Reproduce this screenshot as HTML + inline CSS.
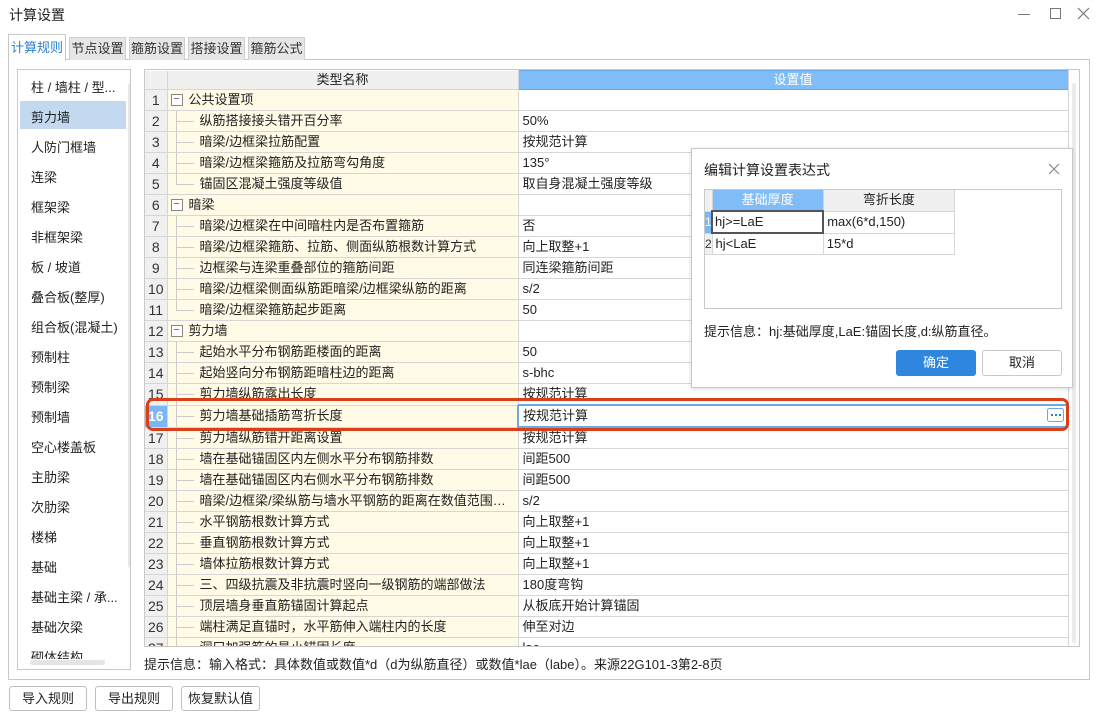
<!DOCTYPE html>
<html><head><meta charset="utf-8"><style>
*{box-sizing:border-box;margin:0;padding:0}
body{width:1100px;height:717px;background:#fff;font-family:"Liberation Sans","Noto Sans CJK SC",sans-serif;font-size:13px;color:#222;position:relative;overflow:hidden}
.a{position:absolute}
.tab{position:absolute;top:37px;height:23px;background:#e6e6e6;border:1px solid #cfcfcf;border-bottom:none;font-size:13px;line-height:22px;text-align:center;color:#333}
table{border-collapse:collapse;table-layout:fixed}
td{height:21px;border-bottom:1px solid #d6d6d6;border-right:1px solid #d6d6d6;white-space:nowrap;overflow:hidden;text-overflow:ellipsis;padding:0;line-height:20px}
td.n{background:#f0f0f0;text-align:center;color:#333;font-size:14px}
td.m{background:#fffbe6;position:relative}
td.v{background:#fff;padding-left:4px}
.g{padding-left:21px}
.bx{position:absolute;left:3px;top:4px;width:12px;height:12px;border:1px solid #888;font-size:11px;line-height:9px;text-align:center;color:#555;background:#fff}
.c{padding-left:32px}
.hl{position:absolute;left:9px;top:10px;width:17px;border-top:1px solid #ccc}
.vl{position:absolute;left:8px;top:0;height:21px;border-left:1px solid #ccc}
.li{position:absolute;left:31px;font-size:13px;color:#222}
.btn{position:absolute;top:686px;height:25px;border:1px solid #bfbfbf;border-radius:3px;background:#fff;text-align:center;line-height:23px;font-size:13px}
</style></head><body>
<div class="a" style="left:9px;top:5px;font-size:14px">计算设置</div>
<div class="a" style="left:1018px;top:14px;width:12px;border-top:1px solid #777"></div>
<div class="a" style="left:1050px;top:8px;width:11px;height:11px;border:1px solid #777"></div>
<svg class="a" style="left:1077px;top:7px" width="13" height="13"><path d="M1 1L12 12M12 1L1 12" stroke="#777" stroke-width="1.2"/></svg>

<div class="a" style="left:8px;top:59px;width:1082px;height:621px;border:1px solid #c8c8c8"></div>
<div class="tab" style="left:8px;top:34px;width:58px;height:27px;background:#fff;color:#2a7fd4;border-color:#c8c8c8;line-height:26px">计算规则</div>
<div class="tab" style="left:69px;width:57px">节点设置</div>
<div class="tab" style="left:129px;width:56px">箍筋设置</div>
<div class="tab" style="left:188px;width:57px">搭接设置</div>
<div class="tab" style="left:248px;width:57px">箍筋公式</div>

<div class="a" style="left:17px;top:69px;width:114px;height:601px;border:1px solid #c8c8c8;overflow:hidden">
<div class="a" style="left:2px;top:31px;width:106px;height:28px;background:#c3d9f0"></div>
<div class="a" style="left:110px;top:13px;width:5px;height:485px;background:#e8e8e8;border-radius:3px"></div>
</div>
<div class="li" style="top:77px">柱 / 墙柱 / 型...</div>
<div class="li" style="top:107px">剪力墙</div>
<div class="li" style="top:137px">人防门框墙</div>
<div class="li" style="top:167px">连梁</div>
<div class="li" style="top:197px">框架梁</div>
<div class="li" style="top:227px">非框架梁</div>
<div class="li" style="top:257px">板 / 坡道</div>
<div class="li" style="top:287px">叠合板(整厚)</div>
<div class="li" style="top:317px">组合板(混凝土)</div>
<div class="li" style="top:347px">预制柱</div>
<div class="li" style="top:377px">预制梁</div>
<div class="li" style="top:407px">预制墙</div>
<div class="li" style="top:437px">空心楼盖板</div>
<div class="li" style="top:467px">主肋梁</div>
<div class="li" style="top:497px">次肋梁</div>
<div class="li" style="top:527px">楼梯</div>
<div class="li" style="top:557px">基础</div>
<div class="li" style="top:587px">基础主梁 / 承...</div>
<div class="li" style="top:617px">基础次梁</div>
<div class="a" style="left:31px;top:647px;height:12px;overflow:hidden;font-size:13px">砌体结构</div>
<div class="a" style="left:30px;top:660px;width:75px;height:5px;background:#e4e4e4;border-radius:3px"></div>

<div class="a" style="left:144px;top:69px;width:936px;height:578px;border:1px solid #c8c8c8;overflow:hidden">
<table style="width:923px">
<colgroup><col style="width:22px"><col style="width:351px"><col style="width:550px"></colgroup>
<tr><td class="n" style="height:19px;line-height:18px"></td><td style="background:#f0f0f0;text-align:center;height:19px;line-height:18px">类型名称</td><td style="background:#80bcf7;border:1px solid #6aa8e8;text-align:center;color:#fff;height:19px;line-height:18px">设置值</td></tr>
<tr><td class="n">1</td><td class="m g"><span class="bx">−</span>公共设置项</td><td class="v"></td></tr>
<tr><td class="n">2</td><td class="m c"><span class="vl"></span><span class="hl"></span>纵筋搭接接头错开百分率</td><td class="v">50%</td></tr>
<tr><td class="n">3</td><td class="m c"><span class="vl"></span><span class="hl"></span>暗梁/边框梁拉筋配置</td><td class="v">按规范计算</td></tr>
<tr><td class="n">4</td><td class="m c"><span class="vl"></span><span class="hl"></span>暗梁/边框梁箍筋及拉筋弯勾角度</td><td class="v">135°</td></tr>
<tr><td class="n">5</td><td class="m c"><span class="vl" style="height:11px"></span><span class="hl"></span>锚固区混凝土强度等级值</td><td class="v">取自身混凝土强度等级</td></tr>
<tr><td class="n">6</td><td class="m g"><span class="bx">−</span>暗梁</td><td class="v"></td></tr>
<tr><td class="n">7</td><td class="m c"><span class="vl"></span><span class="hl"></span>暗梁/边框梁在中间暗柱内是否布置箍筋</td><td class="v">否</td></tr>
<tr><td class="n">8</td><td class="m c"><span class="vl"></span><span class="hl"></span>暗梁/边框梁箍筋、拉筋、侧面纵筋根数计算方式</td><td class="v">向上取整+1</td></tr>
<tr><td class="n">9</td><td class="m c"><span class="vl"></span><span class="hl"></span>边框梁与连梁重叠部位的箍筋间距</td><td class="v">同连梁箍筋间距</td></tr>
<tr><td class="n">10</td><td class="m c"><span class="vl"></span><span class="hl"></span>暗梁/边框梁侧面纵筋距暗梁/边框梁纵筋的距离</td><td class="v">s/2</td></tr>
<tr><td class="n">11</td><td class="m c"><span class="vl" style="height:11px"></span><span class="hl"></span>暗梁/边框梁箍筋起步距离</td><td class="v">50</td></tr>
<tr><td class="n">12</td><td class="m g"><span class="bx">−</span>剪力墙</td><td class="v"></td></tr>
<tr><td class="n">13</td><td class="m c"><span class="vl"></span><span class="hl"></span>起始水平分布钢筋距楼面的距离</td><td class="v">50</td></tr>
<tr><td class="n">14</td><td class="m c"><span class="vl"></span><span class="hl"></span>起始竖向分布钢筋距暗柱边的距离</td><td class="v">s-bhc</td></tr>
<tr><td class="n">15</td><td class="m c"><span class="vl"></span><span class="hl"></span>剪力墙纵筋露出长度</td><td class="v">按规范计算</td></tr>
<tr><td class="n" style="background:#7ab8f5;color:#fff;font-weight:bold">16</td><td class="m c"><span class="vl"></span><span class="hl"></span>剪力墙基础插筋弯折长度</td><td class="v" style="border:2px solid #6aa8e8;position:relative">按规范计算<svg style="position:absolute;right:3px;top:2px" width="17" height="14"><rect x="0.5" y="0.5" width="16" height="13" rx="2" fill="#fff" stroke="#6aa8e8"/><rect x="4" y="6" width="2" height="2" fill="#2a7fd4"/><rect x="8" y="6" width="2" height="2" fill="#2a7fd4"/><rect x="12" y="6" width="2" height="2" fill="#2a7fd4"/></svg></td></tr>
<tr><td class="n">17</td><td class="m c"><span class="vl"></span><span class="hl"></span>剪力墙纵筋错开距离设置</td><td class="v">按规范计算</td></tr>
<tr><td class="n">18</td><td class="m c"><span class="vl"></span><span class="hl"></span>墙在基础锚固区内左侧水平分布钢筋排数</td><td class="v">间距500</td></tr>
<tr><td class="n">19</td><td class="m c"><span class="vl"></span><span class="hl"></span>墙在基础锚固区内右侧水平分布钢筋排数</td><td class="v">间距500</td></tr>
<tr><td class="n">20</td><td class="m c"><span class="vl"></span><span class="hl"></span>暗梁/边框梁/梁纵筋与墙水平钢筋的距离在数值范围内不...</td><td class="v">s/2</td></tr>
<tr><td class="n">21</td><td class="m c"><span class="vl"></span><span class="hl"></span>水平钢筋根数计算方式</td><td class="v">向上取整+1</td></tr>
<tr><td class="n">22</td><td class="m c"><span class="vl"></span><span class="hl"></span>垂直钢筋根数计算方式</td><td class="v">向上取整+1</td></tr>
<tr><td class="n">23</td><td class="m c"><span class="vl"></span><span class="hl"></span>墙体拉筋根数计算方式</td><td class="v">向上取整+1</td></tr>
<tr><td class="n">24</td><td class="m c"><span class="vl"></span><span class="hl"></span>三、四级抗震及非抗震时竖向一级钢筋的端部做法</td><td class="v">180度弯钩</td></tr>
<tr><td class="n">25</td><td class="m c"><span class="vl"></span><span class="hl"></span>顶层墙身垂直筋锚固计算起点</td><td class="v">从板底开始计算锚固</td></tr>
<tr><td class="n">26</td><td class="m c"><span class="vl"></span><span class="hl"></span>端柱满足直锚时，水平筋伸入端柱内的长度</td><td class="v">伸至对边</td></tr>
<tr><td class="n">27</td><td class="m c"><span class="vl"></span><span class="hl"></span>洞口加强筋的最小锚固长度</td><td class="v">lae</td></tr>
</table>
<div class="a" style="left:923px;top:0;width:12px;height:578px;background:#fff;border-left:1px solid #d6d6d6"></div>
<div class="a" style="left:927px;top:13px;width:4px;height:560px;background:#ececec;border-radius:2px"></div>
</div>
<div class="a" style="left:146px;top:398px;width:923px;height:33px;border:3px solid #d9401a;border-radius:7px"></div>
<div class="a" style="left:144px;top:654px;font-size:13px">提示信息：输入格式：具体数值或数值*d（d为纵筋直径）或数值*lae（labe）。来源22G101-3第2-8页</div>

<div class="btn" style="left:9px;width:78px">导入规则</div>
<div class="btn" style="left:95px;width:78px">导出规则</div>
<div class="btn" style="left:181px;width:79px">恢复默认值</div>

<div class="a" style="left:691px;top:148px;width:382px;height:240px;background:#fff;border:1px solid #c8c8c8;box-shadow:0 1px 4px rgba(0,0,0,.15)">
<div class="a" style="left:12px;top:11px;font-size:14px">编辑计算设置表达式</div>
<svg class="a" style="left:356px;top:14px" width="12" height="12"><path d="M1 1L11 11M11 1L1 11" stroke="#888" stroke-width="1.2"/></svg>
<div class="a" style="left:12px;top:40px;width:358px;height:120px;border:1px solid #c8c8c8">
<table style="width:250px">
<colgroup><col style="width:7px"><col style="width:111px"><col style="width:131px"></colgroup>
<tr><td class="n" style="height:21px"></td><td style="background:#80bcf7;color:#fff;text-align:center">基础厚度</td><td style="background:#f0f0f0;text-align:center">弯折长度</td></tr>
<tr><td class="n" style="background:#7ab8f5;color:#fff;font-size:12px">1</td><td style="border:2px solid #555;padding-left:2px">hj&gt;=LaE</td><td style="padding-left:3px">max(6*d,150)</td></tr>
<tr><td class="n" style="font-size:12px">2</td><td style="padding-left:3px">hj&lt;LaE</td><td style="padding-left:3px">15*d</td></tr>
</table>
</div>
<div class="a" style="left:12px;top:172px;font-size:13px">提示信息：hj:基础厚度,LaE:锚固长度,d:纵筋直径。</div>
<div class="a" style="left:204px;top:201px;width:80px;height:26px;background:#2e86de;border-radius:3px;color:#fff;text-align:center;line-height:26px">确定</div>
<div class="a" style="left:290px;top:201px;width:80px;height:26px;border:1px solid #c8c8c8;border-radius:3px;text-align:center;line-height:24px">取消</div>
</div>
</body></html>
